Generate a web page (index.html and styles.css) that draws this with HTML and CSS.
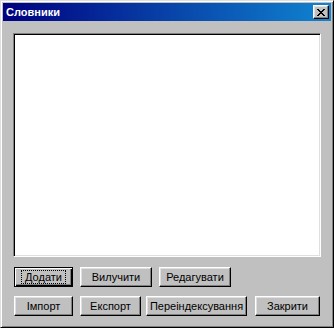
FILE: index.html
```html
<!DOCTYPE html>
<html lang="uk">
<head>
    <meta charset="UTF-8">
    <meta name="viewport" content="width=device-width, initial-scale=1.0">
    <title>Словники</title>
    <link rel="stylesheet" href="styles.css">
</head>
<body>
    <div class="window">
        <div class="title-bar">
            <span class="title">Словники</span>
            <button class="close-button" aria-label="Закрити">
                <svg width="8" height="7" viewBox="0 0 8 7">
                    <path d="M0 0h2v1h1v1h2v-1h1v-1h2v1h-1v1h-1v1h-1v1h1v1h1v1h1v1h-2v-1h-1v-1h-2v1h-1v1h-2v-1h1v-1h1v-1h1v-1h-1v-1h-1v-1h-1z" fill="#000"/>
                </svg>
            </button>
        </div>
        <div class="content">
            <div class="list-box"></div>
            <div class="button-row first-row">
                <button class="btn default btn-add"><span>Додати</span></button>
                <button class="btn btn-remove"><span>Вилучити</span></button>
                <button class="btn btn-edit"><span>Редагувати</span></button>
            </div>
            <div class="button-row">
                <button class="btn btn-import"><span>Імпорт</span></button>
                <button class="btn btn-export"><span>Експорт</span></button>
                <button class="btn btn-reindex"><span>Переіндексування</span></button>
                <button class="btn btn-close"><span>Закрити</span></button>
            </div>
        </div>
    </div>
</body>
</html>
```

FILE: styles.css
```css
body {
    margin: 0;
    padding: 0;
    background: #c0c0c0;
    font-family: 'Liberation Sans', Arial, sans-serif;
    font-size: 11px;
}
.window {
    box-sizing: border-box;
    width: 334px;
    height: 328px;
    background: #c0c0c0;
    border: 1px solid;
    border-color: #dfdfdf #000 #000 #dfdfdf;
    box-shadow: inset 1px 1px #fff, inset -1px -1px #808080;
    padding: 2px;
}
.title-bar {
    height: 18px;
    display: flex;
    align-items: center;
    justify-content: space-between;
    padding: 0 2px 0 3px;
    background: linear-gradient(to right, #000080, #1084d0);
}
.title {
    color: white;
    font-weight: bold;
    font-size: 11px;
}
.close-button {
    box-sizing: border-box;
    width: 16px;
    height: 14px;
    padding: 0;
    display: flex;
    align-items: center;
    justify-content: center;
    background: #c0c0c0;
    border: 1px solid;
    border-color: #fff #000 #000 #fff;
    box-shadow: inset -1px -1px #808080, inset 1px 1px #dfdfdf;
}
.content {
    padding: 12px 10px 0 10px;
}
.list-box {
    box-sizing: border-box;
    height: 224px;
    background: white;
    border: 1px solid;
    border-color: #808080 #fff #fff #808080;
    box-shadow: inset 1px 1px #000, inset -1px -1px #dfdfdf;
}
.button-row {
    display: flex;
    gap: 7px;
    margin-top: 9px;
    padding-left: 1px;
}
.first-row {
    margin-top: 10px;
}
.btn {
    box-sizing: border-box;
    height: 20px;
    padding: 0;
    font-family: 'Liberation Sans', Arial, sans-serif;
    font-size: 11px;
    color: black;
    background: #c0c0c0;
    border: 1px solid;
    border-color: #fff #000 #000 #fff;
    box-shadow: inset -1px -1px #808080, inset 1px 1px #dfdfdf;
    display: flex;
    align-items: center;
    justify-content: center;
}
.btn.default {
    border: 1px solid #000;
    box-shadow: inset 1px 1px #fff, inset -1px -1px #000, inset -2px -2px #808080;
}
.btn.default span {
    border: 1px dotted #000;
    padding: 0 3px;
    line-height: 12px;
}
.btn-add { width: 59px; }
.btn-remove { width: 72px; }
.btn-edit { width: 72px; }
.btn-import { width: 59px; }
.btn-export { width: 61px; }
.btn-reindex { width: 101px; margin-left: -2px; }
.btn-close { width: 65px; margin-left: 1px; }
```
